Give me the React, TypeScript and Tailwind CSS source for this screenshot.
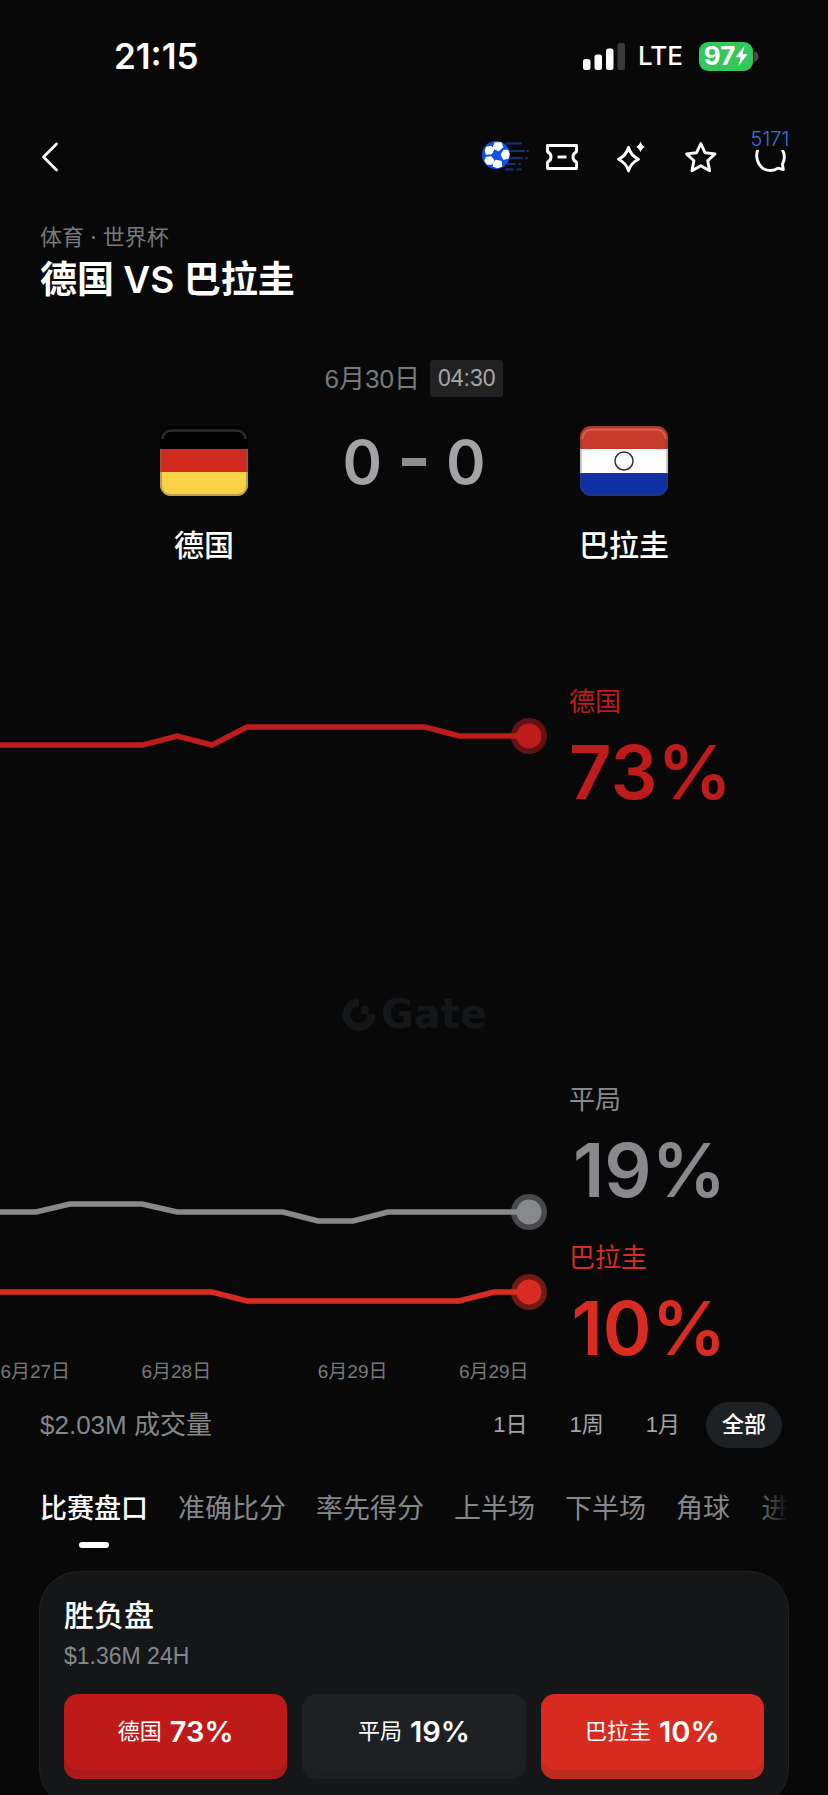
import { useState } from "react";
import clsx from "clsx";

type Point = [number, number];

type Series = {
  name: string;
  color: string;
  points: Point[];
};

const series: Series[] = [
  {
    name: "德国",
    color: "#be1b1d",
    points: [[0, 85], [143, 85], [177, 76], [212, 85], [247, 67], [425, 67], [459, 76], [529, 76]],
  },
  {
    name: "平局",
    color: "#87898d",
    points: [[0, 552], [36, 552], [70, 544], [142, 544], [177, 552], [283, 552], [318, 561], [353, 561], [388, 552], [529, 552]],
  },
  {
    name: "巴拉圭",
    color: "#d82c22",
    points: [[0, 632], [212, 632], [247, 641], [459, 641], [494, 632], [529, 632]],
  },
];

const chartLabels = [
  { name: "德国", value: "73%", className: "text-[#be1b1d]" },
  { name: "平局", value: "19%", className: "mt-[273px] text-[#87898d]" },
  { name: "巴拉圭", value: "10%", className: "mt-[33px] text-[#d82c22]" },
];

const dates = [
  { label: "6月27日", className: "col-start-1" },
  { label: "6月28日", className: "col-start-5" },
  { label: "6月29日", className: "col-start-10" },
  { label: "6月29日", className: "col-start-14" },
];

const ranges = ["1日", "1周", "1月", "全部"];

const tabs = ["比赛盘口", "准确比分", "率先得分", "上半场", "下半场", "角球", "进"];

const outcomes = [
  { name: "德国", value: "73%", className: "bg-[#be1a1a] shadow-[inset_0_-9px_0_#aa1a19]" },
  { name: "平局", value: "19%", className: "bg-[#1e2023] shadow-[inset_0_-9px_0_#1c1e20]" },
  { name: "巴拉圭", value: "10%", className: "bg-[#d82b20] shadow-[inset_0_-9px_0_#bd2a1e]" },
];

function StatusBar() {
  return (
    <div className="flex h-28 items-center justify-between pl-[114px] pr-[69px] font-['Inter',sans-serif]">
      <span className="text-[35px] font-semibold leading-10">21:15</span>
      <div className="flex items-center">
        <svg className="mr-3 h-[27px] w-[43px]" viewBox="0 0 43 27" fill="#fff">
          <rect x="0" y="16" width="7.5" height="11" rx="2.5" />
          <rect x="11.5" y="11.5" width="7.5" height="15.5" rx="2.5" />
          <rect x="23" y="5.5" width="7.5" height="21.5" rx="2.5" />
          <rect x="34.5" y="0" width="7.5" height="27" rx="2.5" fill="#3a3a3a" />
        </svg>
        <span className="mr-4 text-[26px] font-medium leading-8">LTE</span>
        <div className="flex h-[29px] w-[54px] items-center justify-center rounded-[9px] bg-[#34c759]">
          <span className="text-[26px] font-bold leading-7">97</span>
          <svg className="h-[22px] w-[13px]" viewBox="0 0 13 22" fill="#fff">
            <path d="M9.5 1 .5 12.200h5L3.500 21l9-11.800h-5z" />
          </svg>
        </div>
        <svg className="ml-px h-[11px] w-[5px]" viewBox="0 0 5 11" fill="#4a4a4a">
          <path d="M0 0c3 .8 4.500 3 4.500 5.500S3 10.200 0 11z" />
        </svg>
      </div>
    </div>
  );
}

function BallIcon() {
  return (
    <svg className="h-9 w-12" viewBox="0 0 48 36">
      <g stroke="#10307c" strokeWidth="2" strokeLinecap="round">
        <path d="M24 4.500h15M26 12h16M28 19h12M26 25h7M24 30.500h7" />
        <path d="M45 12h1M44 19h1M37 25h1M35 30.500h4" />
      </g>
      <circle cx="14" cy="16" r="14" fill="#1250e6" />
      <g fill="#fff" stroke="#fff" strokeWidth="1.500" strokeLinejoin="round">
        <path d="M13 4h6l1.500 4-4 3.500-5-2.500z" />
        <path d="M22 11.500h3.500l1.500 3.500-1 4-4.500 1-2-4.500z" />
        <path d="M14 21.500l5 1 .5 4.500-4 1.500-4-1.500v-3z" />
        <path d="M4.500 18.500l4.500-.5 2.500 3.500-2 3.500h-4l-2.500-3.500z" />
        <path d="M4.500 8.500l4.500-1 2.500 3-2 4-5 .5-1-3z" />
      </g>
    </svg>
  );
}

function TicketIcon() {
  return (
    <svg className="h-9 w-9" viewBox="0 0 36 36" fill="none" stroke="#fff" strokeWidth="2.900" strokeLinejoin="round">
      <path d="M5.500 6.500h29v6.300a5.600 5.600 0 0 0 0 10.400v6.300h-29v-6.300a5.600 5.600 0 0 0 0-10.400z" />
      <path d="M15.500 18h9" />
    </svg>
  );
}

function SparkleIcon() {
  return (
    <svg className="h-9 w-9" viewBox="0 0 36 36">
      <path
        d="M16.500 8.500c1.600 5.600 4.600 9.200 10 11.700-5.400 2.500-8.400 6.100-10 11.700-1.600-5.600-4.600-9.200-10-11.700 5.400-2.500 8.400-6.100 10-11.700z"
        fill="none"
        stroke="#fff"
        strokeWidth="2.900"
        strokeLinejoin="round"
      />
      <path d="M28.500 2.500c.9 2.700 2 4 4.300 5.400-2.300 1.400-3.400 2.700-4.300 5.400-.9-2.700-2-4-4.300-5.400 2.300-1.400 3.400-2.700 4.300-5.400z" fill="#fff" />
    </svg>
  );
}

function StarIcon() {
  return (
    <svg className="h-9 w-9" viewBox="0 0 36 36" fill="none" stroke="#fff" strokeWidth="2.900" strokeLinejoin="round">
      <path d="M18.800 4.500l4.200 9.200 10 1.200-7.300 6.800 1.900 10-8.800-4.900-8.800 4.900 1.900-10-7.300-6.800 10-1.200z" />
    </svg>
  );
}

function ChatIcon() {
  return (
    <svg className="h-9 w-9" viewBox="0 0 36 36" fill="none" stroke="#fff" strokeWidth="2.900" strokeLinejoin="round">
      <path d="M6 10c-3.800 10 1.500 21.500 12.500 21.500 3 0 5.500-.8 7.500-2.300l5.300 1.500-.8-5.500c2.300-4.500 2.300-10.500-.5-15.200" />
    </svg>
  );
}

function NavBar() {
  return (
    <nav className="flex h-[90px] items-center justify-between px-10">
      <button type="button" aria-label="返回">
        <svg className="h-9 w-5" viewBox="0 0 20 36" fill="none" stroke="#fff" strokeWidth="2.800" strokeLinecap="round" strokeLinejoin="round">
          <path d="M16.500 5 3.500 18l13 13" />
        </svg>
      </button>
      <div className="flex items-center gap-[34px]">
        <div className="flex items-center gap-3">
          <button type="button" aria-label="世界杯">
            <BallIcon />
          </button>
          <button type="button" aria-label="订单">
            <TicketIcon />
          </button>
        </div>
        <button type="button" aria-label="AI">
          <SparkleIcon />
        </button>
        <button type="button" aria-label="收藏">
          <StarIcon />
        </button>
        <button type="button" aria-label="评论" className="relative">
          <ChatIcon />
          <span className="absolute -top-[11px] left-1/2 -translate-x-1/2 bg-[#080808] font-['Inter',sans-serif] text-[20px] font-light leading-[22px] text-[#3672e0]">
            5171
          </span>
        </button>
      </div>
    </nav>
  );
}

function GermanyFlag() {
  return (
    <svg className="h-[70px] w-[88px]" viewBox="0 0 88 70">
      <clipPath id="flag-de">
        <rect width="88" height="70" rx="11" />
      </clipPath>
      <g clipPath="url(#flag-de)">
        <rect width="88" height="23" fill="#000" />
        <rect y="23" width="88" height="23" fill="#d02a1e" />
        <rect y="46" width="88" height="24" fill="#fbd146" />
        <path d="M2.500 13C3 7 7 4.500 12 4.500h64c5 0 9 2.500 9.500 8.500" fill="none" stroke="#2c2c2c" strokeWidth="2.500" />
        <path d="M1 23v36c0 6 4 10 10 10h66c6 0 10-4 10-10V23" fill="none" stroke="#7a7050" strokeOpacity=".5" strokeWidth="2" />
      </g>
    </svg>
  );
}

function ParaguayFlag() {
  return (
    <svg className="h-[70px] w-[88px]" viewBox="0 0 88 70">
      <clipPath id="flag-py">
        <rect width="88" height="70" rx="11" />
      </clipPath>
      <g clipPath="url(#flag-py)">
        <rect width="88" height="23" fill="#c53a2a" />
        <rect y="23" width="88" height="24" fill="#fff" />
        <rect y="47" width="88" height="23" fill="#1230a6" />
        <path d="M2 13C3 7 7 3.500 12 3.500h64c5 0 9 3.500 10 9.500" fill="none" stroke="#dc5a46" strokeWidth="2.500" />
        <rect x="1" y="1" width="86" height="68" rx="10" fill="none" stroke="#444" strokeOpacity=".3" strokeWidth="2" />
      </g>
      <circle cx="44" cy="35" r="9" fill="#fff" stroke="#333" strokeWidth="1.500" />
    </svg>
  );
}

function MatchHeader() {
  return (
    <section className="mt-[58px]">
      <div className="flex items-center justify-center gap-[10px]">
        <span className="text-[26px] leading-9 text-[#77797c]">6月30日</span>
        <span className="rounded-[3px] bg-[#212121] px-2 text-[23px] leading-[37px] text-[#a6a7a9]">04:30</span>
      </div>
      <div className="mt-[29px] flex justify-center">
        <div className="flex w-[120px] flex-col items-center">
          <GermanyFlag />
          <span className="mt-[30px] text-[30px] font-medium leading-10">德国</span>
        </div>
        <div className="flex h-[72px] w-[300px] items-center justify-center gap-5 font-['Inter',sans-serif] text-[60px] font-semibold leading-[72px] text-[#a2a3a6]">
          <span>0</span>
          <span className="h-2 w-6 bg-[#8c8d90]" />
          <span>0</span>
        </div>
        <div className="flex w-[120px] flex-col items-center">
          <ParaguayFlag />
          <span className="mt-[30px] text-[30px] font-medium leading-10">巴拉圭</span>
        </div>
      </div>
    </section>
  );
}

function OddsChart() {
  return (
    <section className="relative mt-[94px] flex">
      <div className="min-w-0 flex-1">
        <svg className="h-[690px] w-full" viewBox="0 0 548 690" preserveAspectRatio="xMaxYMid slice">
          {series.map((item) => {
            const [x, y] = item.points[item.points.length - 1];
            return (
              <g key={item.name}>
                <polyline points={item.points.join(" ")} fill="none" stroke={item.color} strokeWidth="5.500" />
                <circle cx={x} cy={y} r="18" fill={item.color} fillOpacity=".5" />
                <circle cx={x} cy={y} r="12.500" fill={item.color} />
              </g>
            );
          })}
        </svg>
        <div className="mt-[10px] grid grid-cols-15 pr-[19px] text-[19px] leading-6 text-[#77797c]">
          {dates.map((date) => (
            <span key={date.className} className={clsx("col-span-2 row-start-1 whitespace-nowrap text-center", date.className)}>
              {date.label}
            </span>
          ))}
        </div>
      </div>

      <div className="w-[280px] pl-[21px] pr-[102px] pt-6">
        {chartLabels.map((item) => (
          <div key={item.name} className={item.className}>
            <p className="text-[26px] leading-9">{item.name}</p>
            <p className="mt-[15px] text-right font-['Inter',sans-serif] text-[74px] font-semibold leading-[74px]">{item.value}</p>
          </div>
        ))}
      </div>

      <div className="absolute inset-x-0 top-[334px] flex items-center justify-center gap-1 text-[#14171a]">
        <svg className="h-9 w-9" viewBox="0 0 32 32">
          <path d="M16 5.500A11 11 0 1 0 27 16" fill="none" stroke="currentColor" strokeWidth="7" />
          <path d="M18 9h6.500v7H18z" fill="currentColor" />
        </svg>
        <span className="font-['DejaVu_Sans',sans-serif] text-[40px] font-bold leading-10">Gate</span>
      </div>
    </section>
  );
}

function VolumeRow() {
  const [range, setRange] = useState("全部");

  return (
    <section className="mt-[18px] flex items-center justify-between pl-10 pr-[46px]">
      <span className="text-[26px] leading-9 text-[#85878a]">$2.03M 成交量</span>
      <div className="flex gap-[10px]">
        {ranges.map((item) => (
          <button
            key={item}
            type="button"
            onClick={() => setRange(item)}
            className={clsx(
              "rounded-full px-4 text-[22px] leading-[46px]",
              item === range ? "bg-[#1e2124] font-medium text-white" : "text-[#a2a4a7]",
            )}
          >
            {item}
          </button>
        ))}
      </div>
    </section>
  );
}

function MarketTabs() {
  const [active, setActive] = useState("比赛盘口");

  return (
    <div className="relative mx-10 mt-[41px] overflow-hidden">
      <div className="flex gap-[30px]">
        {tabs.map((tab) => (
          <button
            key={tab}
            type="button"
            onClick={() => setActive(tab)}
            className={clsx(
              "flex shrink-0 flex-col items-center text-[27px] leading-10",
              tab === active ? "font-medium text-white" : "text-[#85878a]",
            )}
          >
            {tab}
            <span className={clsx("mt-[13px] h-[6px] w-[30px] rounded-[3px]", tab === active && "bg-white")} />
          </button>
        ))}
      </div>
      <div className="absolute inset-y-0 right-0 w-8 bg-linear-to-l from-[#080808] to-transparent" />
    </div>
  );
}

function MoneylineCard() {
  return (
    <section className="mx-[39px] mt-[23px] rounded-[40px] border border-[#212326] bg-[#141618] px-6 pb-7 pt-6">
      <h2 className="text-[30px] font-medium leading-10">胜负盘</h2>
      <p className="mt-[6px] text-[23px] leading-7 text-[#85878a]">$1.36M 24H</p>
      <div className="mt-6 grid grid-cols-3 gap-[15px]">
        {outcomes.map((item) => (
          <button
            key={item.name}
            type="button"
            className={clsx("flex h-[85px] items-center justify-center gap-2 rounded-[14px] pb-[9px]", item.className)}
          >
            <span className="text-[22px] leading-8">{item.name}</span>
            <span className="font-['Inter',sans-serif] text-[29px] font-semibold leading-8">{item.value}</span>
          </button>
        ))}
      </div>
    </section>
  );
}

export default function App() {
  return (
    <main className="h-screen overflow-hidden bg-[#080808] font-['Liberation_Sans','Noto_Sans_CJK_SC',sans-serif] text-white">
      <StatusBar />
      <NavBar />
      <header className="px-10 pt-5 font-['Inter','Noto_Sans_CJK_SC',sans-serif]">
        <p className="text-[22px] leading-[30px] text-[#77797c]">体育 · 世界杯</p>
        <h1 className="mt-[6px] text-[37px] font-semibold leading-[44px]">德国 VS 巴拉圭</h1>
      </header>
      <MatchHeader />
      <OddsChart />
      <VolumeRow />
      <MarketTabs />
      <MoneylineCard />
    </main>
  );
}
